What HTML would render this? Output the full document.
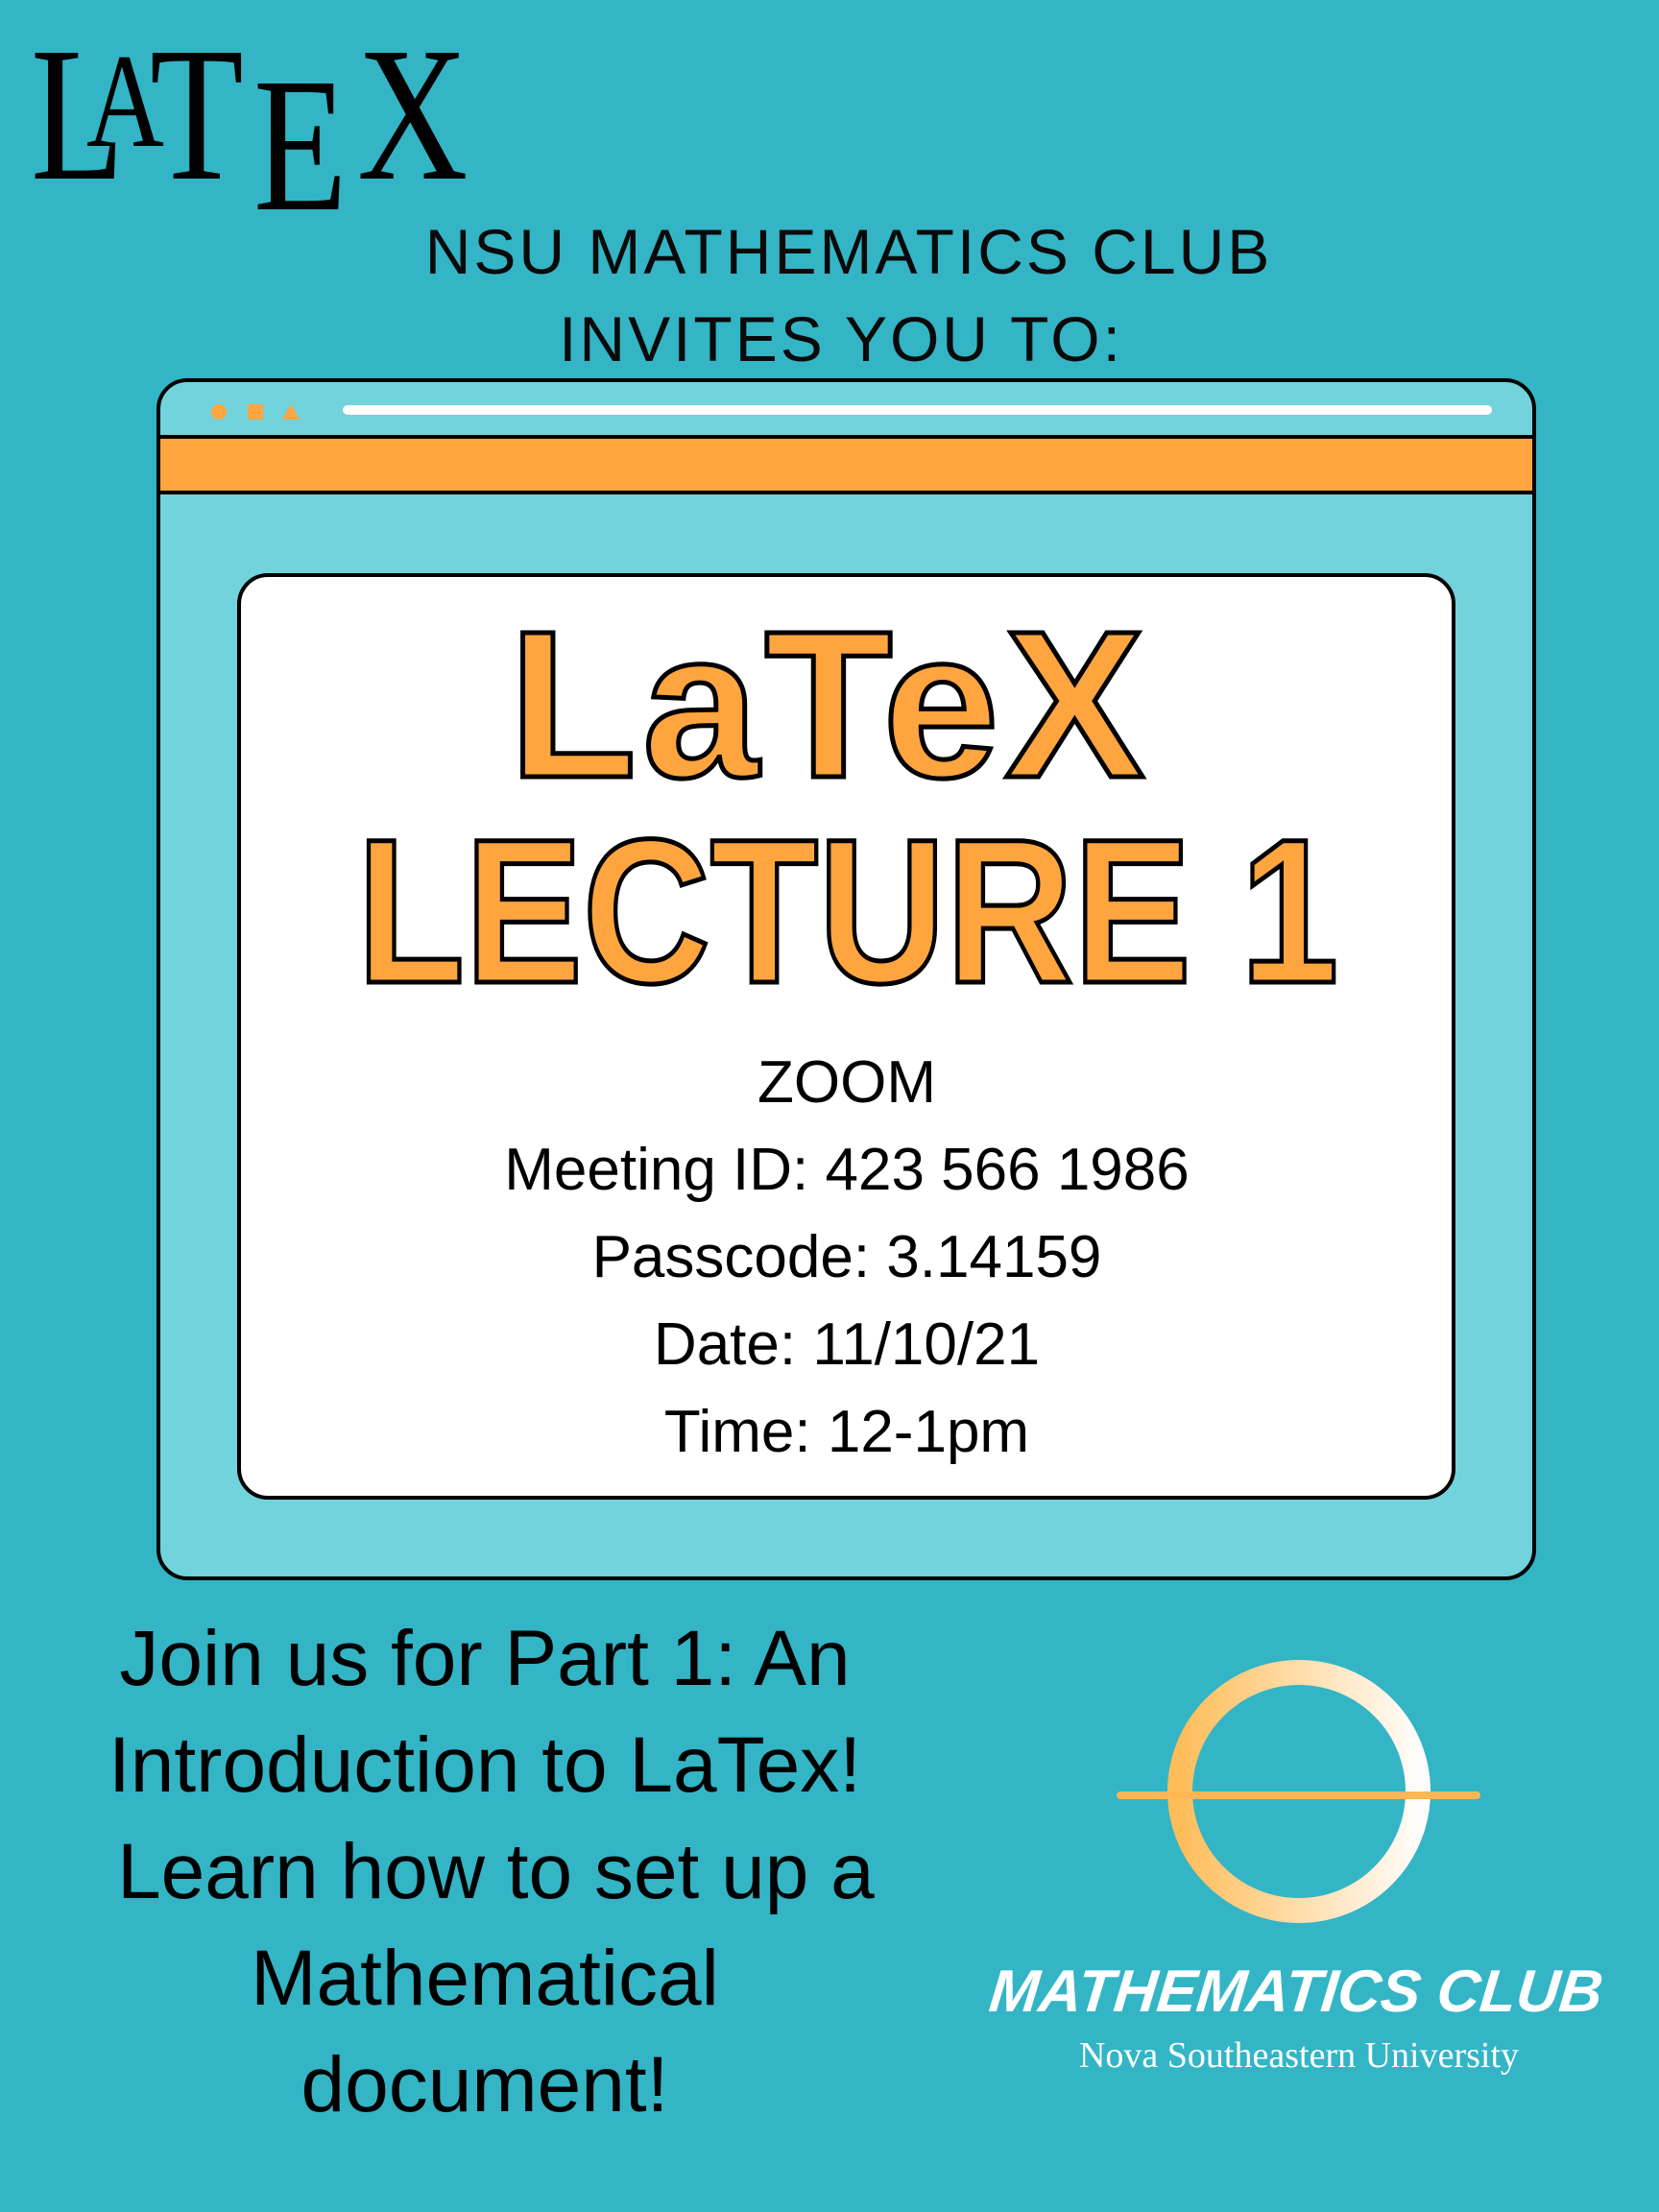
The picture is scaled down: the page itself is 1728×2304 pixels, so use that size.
<!DOCTYPE html>
<html><head><meta charset="utf-8"><style>
*{margin:0;padding:0;box-sizing:border-box}
body{width:1728px;height:2304px;background:#33b5c6;position:relative;overflow:hidden;font-family:"Liberation Sans",sans-serif}
.a{position:absolute}
.c{text-align:center;white-space:nowrap}
</style></head><body>
<!-- LaTeX logo -->
<div class="a" style="left:32px;top:20px;font-family:'Liberation Serif',serif;color:#000;height:200px;width:480px">
 <span class="a" style="left:0;top:0;font-size:200px;line-height:200px;transform:scaleX(.8);transform-origin:left">L</span>
 <span class="a" style="left:58px;top:16px;font-size:140px;line-height:140px;transform:scaleX(.8);transform-origin:left">A</span>
 <span class="a" style="left:124px;top:0;font-size:200px;line-height:200px;transform:scaleX(.8);transform-origin:left">T</span>
 <span class="a" style="left:232px;top:32px;font-size:200px;line-height:200px;transform:scaleX(.8);transform-origin:left">E</span>
 <span class="a" style="left:340px;top:0;font-size:200px;line-height:200px;transform:scaleX(.8);transform-origin:left">X</span>
</div>
<div class="a c" style="left:0;width:1768px;top:222px;font-size:66px;letter-spacing:3px;line-height:80px;color:#0a0a0a">NSU MATHEMATICS CLUB</div>
<div class="a c" style="left:0;width:1752px;top:313px;font-size:66px;letter-spacing:3px;line-height:80px;color:#0a0a0a">INVITES YOU TO:</div>
<!-- window -->
<div class="a" style="left:163px;top:394px;width:1437px;height:1252px;background:#72d3dc;border:4px solid #000;border-radius:32px;overflow:hidden">
 <div class="a" style="left:0;right:0;top:55px;height:62px;background:#ffa53f;border-top:4px solid #000;border-bottom:4px solid #000"></div>
 <div class="a" style="left:53px;top:23px;width:16px;height:16px;border-radius:50%;background:#ffa53f"></div>
 <div class="a" style="left:91px;top:23px;width:16px;height:16px;background:#ffa53f"></div>
 <div class="a" style="left:127px;top:23px;width:0;height:0;border-left:9px solid transparent;border-right:9px solid transparent;border-bottom:16px solid #ffa53f"></div>
 <div class="a" style="left:190px;top:24px;width:1197px;height:10px;border-radius:5px;background:#fff"></div>
</div>
<div class="a" style="left:247px;top:597px;width:1269px;height:965px;background:#fff;border:4px solid #000;border-radius:32px"></div>
<div class="a c" style="left:0;width:1728px;top:600px;font-size:218px;font-weight:bold;line-height:270px;color:#ffa53f;-webkit-text-stroke:5px #000;letter-spacing:6px">LaTeX</div>
<div class="a c" style="left:0;width:1766px;top:815px;font-size:214px;font-weight:bold;line-height:270px;color:#ffa53f;-webkit-text-stroke:5px #000;letter-spacing:0px;transform:scaleX(.86)">LECTURE 1</div>
<div class="a c" style="left:0;width:1764px;top:1082px;font-size:62px;line-height:91px;color:#000">ZOOM<br>Meeting ID: 423 566 1986<br>Passcode: 3.14159<br>Date: 11/10/21<br>Time: 12-1pm</div>
<div class="a c" style="left:0;width:1010px;top:1672px;font-size:82px;line-height:111px;color:#000">Join us for Part 1: An<br>Introduction to LaTex!<br>&nbsp;Learn how to set up a<br>Mathematical<br>document!</div>
<!-- logo -->
<svg class="a" style="left:1150px;top:1720px" width="420" height="300" viewBox="0 0 420 300">
 <defs><linearGradient id="g" x1="0" x2="1"><stop offset="0" stop-color="#ffbd5a"/><stop offset="1" stop-color="#fffdfb"/></linearGradient></defs>
 <ellipse cx="203" cy="146" rx="124" ry="124" fill="none" stroke="url(#g)" stroke-width="26"/>
 <line x1="17" y1="150" x2="388" y2="150" stroke="#ffb655" stroke-width="8" stroke-linecap="round"/>
</svg>
<div class="a c" style="left:1030px;width:640px;top:2040px;font-size:62px;font-weight:bold;font-style:italic;color:#fff;line-height:70px;transform:skewX(-6deg)">MATHEMATICS CLUB</div>
<div class="a c" style="left:1030px;width:646px;top:2118px;font-family:'Liberation Serif',serif;font-size:38px;color:#fff;line-height:46px">Nova Southeastern University</div>
</body></html>
